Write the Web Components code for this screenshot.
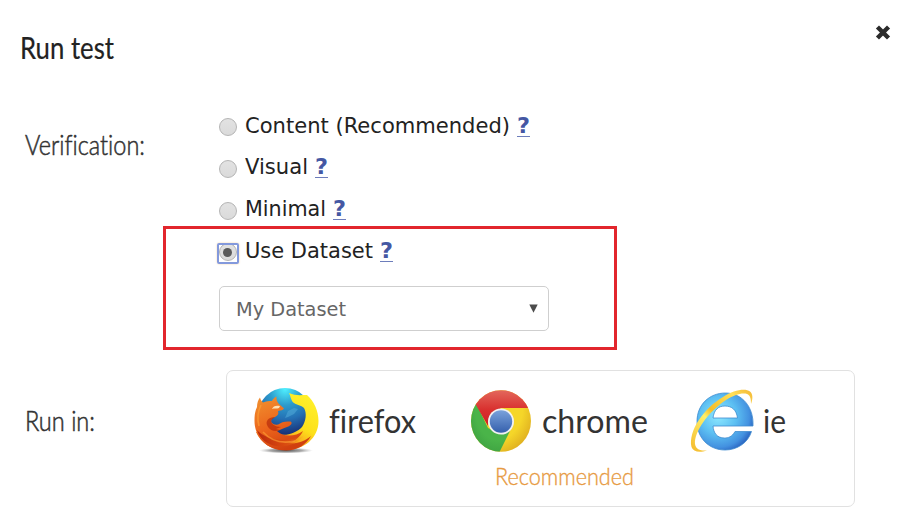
<!DOCTYPE html>
<html lang="en">
<head>
<meta charset="utf-8">
<title>Run test</title>
<style>
html,body{margin:0;background:#fff;overflow:hidden}
</style>
</head>
<body>
<run-dialog></run-dialog>
<script>
const define = (name, html, ready) => customElements.define(name, class extends HTMLElement {
  connectedCallback() {
    if (this.shadowRoot) return;
    this.attachShadow({mode: 'open'}).innerHTML = html(this);
    if (ready) ready(this);
  }
});

/* One line of text condensed or widened to the width given in "fit". */
define('fit-text', () => `<style>
  :host{display:block;white-space:nowrap;flex:none;font-variant-ligatures:none}
  span{display:inline-block;transform-origin:0 50%}
</style><span><slot></slot></span>`, el => {
  const w = +el.getAttribute('fit');
  const s = el.shadowRoot.querySelector('span');
  el.style.width = w + 'px';
  s.style.transform = `scaleX(${w / s.getBoundingClientRect().width})`;
});

define('close-button', () => `<style>
  :host{display:block;width:16px;height:16px}svg{display:block}
</style><svg width="16" height="16" viewBox="0 0 16 16"><path d="M4 3.500 12 11.500M12 3.500 4 11.500" stroke="#2b2b2b" stroke-width="4.400" stroke-linecap="square" stroke-linejoin="round"/></svg>`);

define('radio-option', el => `<style>
  :host{display:flex;align-items:center;height:41.67px;font:21px/41px "DejaVu Sans",Verdana,sans-serif;color:#222}
  .r{box-sizing:border-box;width:18px;height:18px;border-radius:50%;border:1.5px solid #b4b4b4;background:linear-gradient(#e2e2e2,#dadada);margin:4px 0 0;display:grid;place-items:center}
  .box{display:grid;flex:none;width:18px;height:41px;place-items:center;margin-right:8px;position:relative}
  fit-text{margin-top:2px}
  :host([checked]) .r::after{content:"";width:9px;height:9px;border-radius:50%;background:#595959}
  :host([checked]) .box::after{content:"";position:absolute;left:-2px;top:13px;width:18px;height:17.5px;border:2px solid #8399dc;border-radius:2px;box-shadow:0 0 2px #f3cf9b}
  a{color:#4557a3;font-weight:bold;text-decoration:none;border-bottom:1.5px solid #6d7dbb;line-height:19px;height:19px;margin-left:7px;width:13px;margin-top:3px}
  a fit-text{margin:0}
</style><div class="box"><div class="r"></div></div><fit-text fit="${el.getAttribute('fit')}">${el.getAttribute('label')}</fit-text><a><fit-text fit="13">?</fit-text></a>`);

define('select-box', () => `<style>
  :host{box-sizing:border-box;display:flex;justify-content:space-between;align-items:center;width:330px;height:45px;border:1.5px solid #cfcfcf;border-radius:5px;padding:0 10px 0 16px;font:20px/42px "DejaVu Sans",Verdana,sans-serif;color:#666}
  svg{display:block;margin-top:-1px}
</style><slot></slot><svg width="9" height="9" viewBox="0 0 9 9"><path d="M.3 .4H8.7L4.5 8.8Z" fill="#4c4c4c"/></svg>`);

const icons = {
firefox: `<svg width="66" height="68" viewBox="0 0 66 68"><defs>
<radialGradient id="g" cx=".5" cy=".02" r=".85"><stop offset="0" stop-color="#4ff0ff"/><stop offset=".35" stop-color="#2d9bcc"/><stop offset=".65" stop-color="#2470b4"/><stop offset="1" stop-color="#172e74"/></radialGradient>
<linearGradient id="o" x1=".1" y1=".1" x2=".5" y2="1"><stop offset="0" stop-color="#f08a2c"/><stop offset=".5" stop-color="#ec651c"/><stop offset="1" stop-color="#d0400f"/></linearGradient>
<linearGradient id="y" x1=".8" y1="0" x2=".25" y2="1"><stop offset="0" stop-color="#fff12b"/><stop offset=".5" stop-color="#fde01a"/><stop offset=".75" stop-color="#f9a31e"/><stop offset="1" stop-color="#d84a10"/></linearGradient>
<linearGradient id="t" x1="0" y1="0" x2="1" y2="0"><stop offset="0" stop-color="#b5260c"/><stop offset=".55" stop-color="#d8480f" stop-opacity=".8"/><stop offset="1" stop-color="#f08a1c" stop-opacity="0"/></linearGradient>
<radialGradient id="s"><stop offset="0" stop-color="#333" stop-opacity=".85"/><stop offset=".6" stop-color="#555" stop-opacity=".5"/><stop offset="1" stop-color="#999" stop-opacity="0"/></radialGradient></defs>
<ellipse cx="33" cy="63.500" rx="27" ry="3" fill="url(#s)"/>
<circle cx="32" cy="28" r="27" fill="url(#g)"/>
<path d="M35 24l6-3 4 1-4 5-6 3-3 1Z" fill="#4fa5d5" opacity=".6"/>
<path d="M36 6C42 9 48 8 54 8 61 14 65.500 24 65.500 34 65.500 51 51 63 33 63 18 63 8 56 3 45 10 44 20 46 28 47.500 34 49 45 45 49 40 53 34 54 26 51 21 48 18 44 18 41 16 38 14 38 10 36 6Z" fill="url(#y)"/>
<path d="M4 20C4 16 5 13 7 10.500 7.500 13 9 14.500 10 15.500 13 14 16 14 19 14 20 12 21.500 10.500 23.500 9.500 23 12 24 15 26 17L31 21.500C30 23 28 23.500 25 24 26 27 25 28.500 22 30 19 31 17.500 33 18.500 35.500 21 38 24 38.500 27 36.500 30 34.500 34 34.500 37.500 34.500 40 36 38 38.500 34 40 30 41 28 43 24 44 30 50 42 50 50 44 47 50 42 54 36 56 43 57 51 55 58 49 53 58 44 63.500 33 63.500 14 63.500 1.500 50 1.500 34 1.500 28 2 24 4 20Z" fill="url(#o)"/>
<path d="M4 43C13 53 32 57 52 48 45 57 34 60 24 59 14 58 7 52 4 43Z" fill="url(#t)"/>
<path d="M22 30C16 30 11 34 15 40 18 44 22 45 27 43L23 42 28 40C22 40 18 37 18 33.500Z" fill="#b72b0c" opacity=".7"/>
<path d="M19 22C20 19 23 18 27 19L26 21C24 22 21 21 19 22Z" fill="#ffe1b5"/>
<path d="M8 18C5 24 4 32 6 39M10 45C18 54 29 57 42 54" fill="none" stroke="#ffa436" stroke-width="1.600" opacity=".6"/></svg>`,
chrome: `<svg width="60" height="62" viewBox="0 0 60 62"><defs>
<linearGradient id="r" x1="0" y1="0" x2="0" y2="1"><stop offset="0" stop-color="#e3685c"/><stop offset=".55" stop-color="#d9302e"/><stop offset="1" stop-color="#cf1f27"/></linearGradient>
<linearGradient id="b" x1="0" y1="0" x2="0" y2="1"><stop offset="0" stop-color="#7aa2db"/><stop offset="1" stop-color="#3560ad"/></linearGradient>
<radialGradient id="yy" cx=".3" cy=".3" r=".8"><stop offset=".7" stop-color="#f5d629"/><stop offset="1" stop-color="#dfae20"/></radialGradient>
<radialGradient id="gg" cx=".7" cy=".2" r=".9"><stop offset=".65" stop-color="#4ab449"/><stop offset="1" stop-color="#3c9f40"/></radialGradient></defs>
<clipPath id="c"><ellipse cx="30" cy="31" rx="30" ry="30.8"/></clipPath><g clip-path="url(#c)">
<path d="M0 0H60V62H0Z" fill="url(#yy)"/>
<path d="M0 8 6 15 17 38 30 44 39 41 28.500 62H0Z" fill="url(#gg)"/>
<path d="M0 0H60V18H30L17 31V36L5 15Z" fill="url(#r)"/></g>
<circle cx="30" cy="31.500" r="13" fill="#f1f1f1"/><circle cx="30" cy="31.500" r="11.200" fill="url(#b)"/></svg>`,
ie: `<svg width="64" height="64" viewBox="0 0 64 64"><defs>
<radialGradient id="i" cx=".38" cy=".4" r=".65"><stop offset="0" stop-color="#8ee9ff"/><stop offset=".5" stop-color="#5cbff2"/><stop offset=".85" stop-color="#4391e0"/><stop offset="1" stop-color="#2d69c4"/></radialGradient>
<linearGradient id="w" x1="0" y1="1" x2="1" y2="0"><stop offset="0" stop-color="#f4b92c"/><stop offset=".4" stop-color="#fff06a"/><stop offset=".5" stop-color="#f5bd26"/><stop offset=".8" stop-color="#ffe057"/><stop offset="1" stop-color="#f3b634"/></linearGradient></defs>
<path d="M35.500 4C19 4 7 16 7 32.500S19 61 35 61C47 61 58 54 61.500 42.500H45C42 48 38 49 34.500 49 27 49 23.500 44 23 37H63C64 18 52 4 35.500 4ZM23 29C24 21 28 17 35 17S46.500 21 47.500 29Z" fill="url(#i)" stroke="#3f8bcf" stroke-width=".8"/>
<path d="M17 61.500C9 64 3 62.500 1.500 58-2 42 14 19 33 8 44 1 55-1 60 2.500 63 5 63 10 61 15 61 9 60 6 57 5 52 3.500 44 6 36 11 18 23 4 43 5 55 6 61 11 62 17 61.500Z" fill="url(#w)"/></svg>`
};
define('browser-icon', el => `<style>:host{display:block;flex:none}svg{display:block;overflow:visible}</style>${icons[el.getAttribute('name')]}`);

define('browser-choice', () => `<style>
  :host{display:grid;grid-template-columns:auto auto;align-content:start;justify-content:start;font:32px/40px Lato,sans-serif;color:#333}
  .i{height:68px}
  .t{padding-top:12px}
  ::slotted([slot=note]){grid-column:1/3;font-size:24px;font-weight:300;line-height:30px;color:#e79a42;-webkit-text-stroke:.35px #e79a42}
</style><div class="i"><slot name="icon"></slot></div><div class="t"><slot></slot></div><slot name="note"></slot>`);

define('browser-card', () => `<style>
  :host{box-sizing:border-box;display:grid;grid-template-columns:217px 220px 1fr;width:629px;height:137px;border:1.5px solid #e1e1e1;border-radius:7px;padding:16px 0 0 26px}
</style><slot></slot>`);

define('form-row', () => `<style>
  :host{display:grid;grid-template-columns:194px 1fr;padding-left:24.5px}
  .l{font:300 28px/40px Lato,sans-serif;color:#333;-webkit-text-stroke:.55px #333}
</style><div class="l"><slot name="label"></slot></div><div><slot></slot></div>`);

define('run-dialog', () => `<style>
  :host{display:block;position:relative;width:918px;height:517px;background:#fff}
  header{display:flex;justify-content:space-between;height:104.5px;box-sizing:border-box;padding:25px 27px 0 20px;font:30px/45px Lato,sans-serif;color:#222;-webkit-text-stroke:.2px #222}
  .v{height:265.5px}
  .v fit-text[slot]{margin-top:19px}
  .run fit-text[slot=label]{margin-top:31px;font-size:27px}
  select-box{margin-top:15px}
  browser-card{margin-left:7px}
  .mark{position:absolute;left:163px;top:226px;width:448px;height:118px;border:3.3px solid #e2262d}
</style>
<header><fit-text fit="94">Run test</fit-text><close-button></close-button></header>
<form-row class="v"><fit-text slot="label" fit="120">Verification:</fit-text>
<radio-option label="Content (Recommended)" fit="265"></radio-option>
<radio-option label="Visual" fit="63"></radio-option>
<radio-option label="Minimal" fit="81"></radio-option>
<radio-option label="Use Dataset" fit="128" checked></radio-option>
<select-box><fit-text fit="110">My Dataset</fit-text></select-box></form-row>
<form-row class="run"><fit-text slot="label" fit="70">Run in:</fit-text>
<browser-card>
<browser-choice><browser-icon slot="icon" name="firefox"></browser-icon><fit-text fit="87" style="margin-left:10px;margin-top:2px">firefox</fit-text></browser-choice>
<browser-choice><browser-icon slot="icon" name="chrome" style="margin:3px 0 0 1px"></browser-icon><fit-text fit="106" style="margin-left:11px;margin-top:2px">chrome</fit-text><fit-text slot="note" fit="139" style="margin:6px 0 0 25px">Recommended</fit-text></browser-choice>
<browser-choice><browser-icon slot="icon" name="ie" style="margin-top:2px"></browser-icon><fit-text fit="23" style="margin-left:9px;margin-top:2px">ie</fit-text></browser-choice>
</browser-card></form-row>
<div class="mark"></div>`);
</script>
</body>
</html>
